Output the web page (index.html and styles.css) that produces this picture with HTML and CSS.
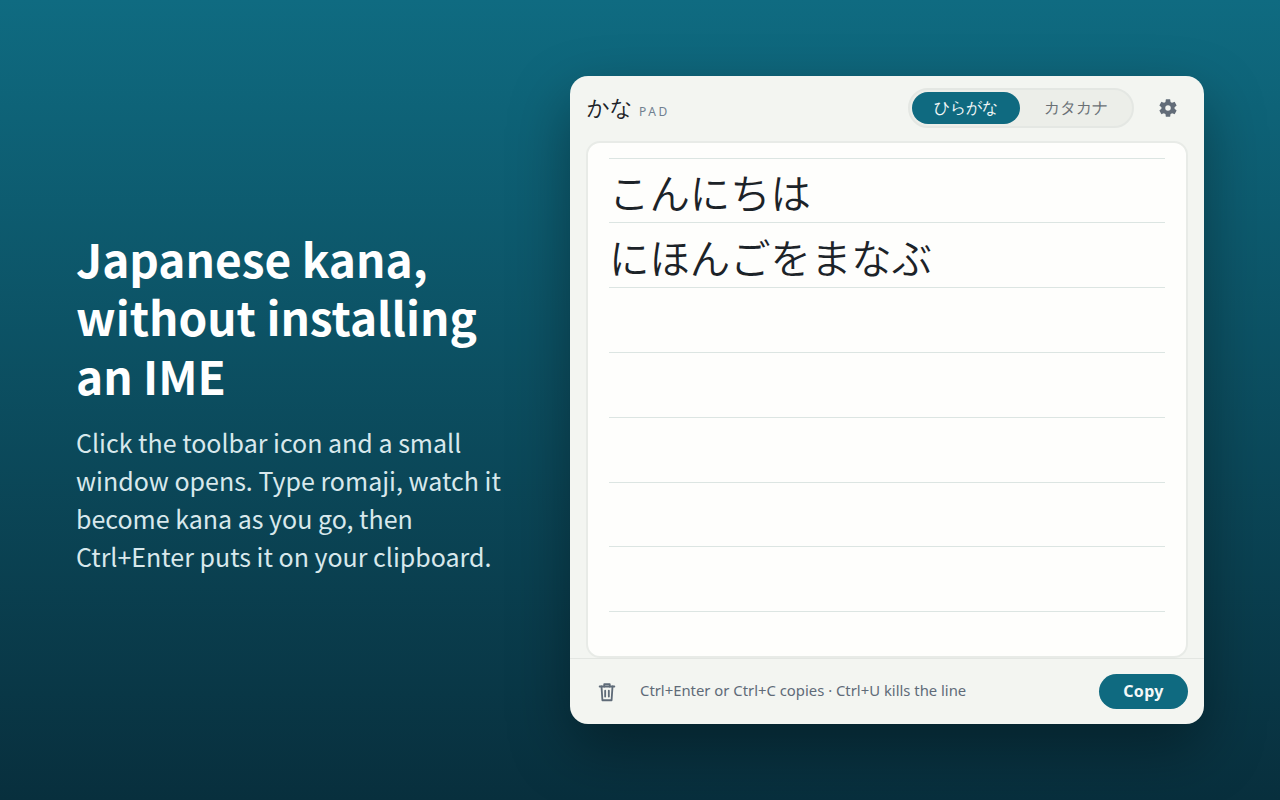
FILE: index.html
```html
<!DOCTYPE html>
<html lang="en">
<head>
<meta charset="utf-8">
<title>かな PAD</title>
<link rel="stylesheet" href="styles.css">
</head>
<body>
<main class="stage">
  <section class="pitch">
    <h1 class="headline">Japanese kana, without installing an IME</h1>
    <p class="lede">Click the toolbar icon and a small window opens. Type romaji, watch it become kana as you go, then Ctrl+Enter puts it on your clipboard.</p>
  </section>
  <section class="pad">
    <header class="pad-head">
      <div class="brand"><span class="brand-kana">かな</span><span class="brand-pad">PAD</span></div>
      <div class="tabs">
        <span class="tab tab-on">ひらがな</span>
        <span class="tab tab-off">カタカナ</span>
      </div>
      <svg class="gear" viewBox="0 0 24 24" width="22" height="22" aria-hidden="true"><path fill="currentColor" d="M19.14 12.94c.04-.3.06-.61.06-.94 0-.32-.02-.64-.07-.94l2.03-1.58a.49.49 0 0 0 .12-.61l-1.92-3.32a.49.49 0 0 0-.59-.22l-2.39.96c-.5-.38-1.03-.7-1.62-.94l-.36-2.54a.48.48 0 0 0-.48-.41h-3.84a.47.47 0 0 0-.47.41l-.36 2.54c-.59.24-1.13.57-1.62.94l-2.39-.96a.48.48 0 0 0-.59.22L2.74 8.87a.47.47 0 0 0 .12.61l2.03 1.58c-.05.3-.09.63-.09.94s.02.64.07.94l-2.03 1.58a.49.49 0 0 0-.12.61l1.92 3.32c.12.22.37.29.59.22l2.39-.96c.5.38 1.03.7 1.62.94l.36 2.54c.05.24.24.41.48.41h3.84c.24 0 .44-.17.47-.41l.36-2.54c.59-.24 1.13-.56 1.62-.94l2.39.96c.22.08.47 0 .59-.22l1.92-3.32a.47.47 0 0 0-.12-.61zM12 15A3 3 0 1 1 12 9a3 3 0 0 1 0 6z"/></svg>
    </header>
    <div class="paper">
      <div class="ruled">
        <div class="line">こんにちは</div>
        <div class="line">にほんごをまなぶ</div>
      </div>
    </div>
    <footer class="pad-foot">
      <svg class="trash" viewBox="0 0 24 24" width="22" height="22" aria-hidden="true"><g fill="none" stroke="currentColor" stroke-width="2" stroke-linecap="round" stroke-linejoin="round"><path d="M4 6h16"/><path d="M9 6V3.5h6V6"/><path d="M6 6l1 15h10l1-15"/><path d="M10 10.5v6.5"/><path d="M14 10.5v6.5"/></g></svg>
      <span class="hint">Ctrl+Enter or Ctrl+C copies · Ctrl+U kills the line</span>
      <span class="copy">Copy</span>
    </footer>
  </section>
</main>
</body>
</html>
```

FILE: styles.css
```css
* { box-sizing: border-box; }
html, body { margin: 0; height: 100%; }
body {
  font-family: "Noto Sans CJK JP", "Noto Sans", sans-serif;
  background: #0e6a80;
  overflow: hidden;
}
.stage {
  width: 1280px;
  height: 800px;
  display: flex;
  align-items: center;
  justify-content: space-between;
  padding: 0 76px 0 76px;
  background: linear-gradient(180deg, #0f6b81 0%, #082f3d 100%);
}
.pitch { width: 440px; flex: none; color: #fff; padding-top: 4px; }
.headline {
  margin: 0;
  font-size: 46px;
  line-height: 58.5px;
  font-weight: 700;
  color: #fff;
}
.lede {
  margin: 19px 0 0;
  font-size: 25px;
  line-height: 38px;
  color: #d8e8ec;
}
.pad {
  width: 634px;
  height: 648px;
  flex: none;
  display: flex;
  flex-direction: column;
  background: #f3f5f1;
  border-radius: 18px;
  box-shadow: 0 24px 60px rgba(0, 0, 0, .35);
}
.pad-head {
  height: 65px;
  flex: none;
  display: flex;
  align-items: center;
  padding: 0 25px 1px 17px;
}
.brand { display: flex; align-items: center; gap: 6px; flex: 1; }
.brand-kana { font-family: sans-serif; font-size: 22px; line-height: 1.4; color: #1c2328; }
.brand-pad {
  font-family: "Noto Sans", sans-serif;
  font-size: 12px;
  line-height: 1;
  margin-top: 8px;
  letter-spacing: 2.6px;
  color: #708090;
}
.tabs {
  display: flex;
  width: 226px;
  height: 40px;
  padding: 2px;
  border: 2px solid #e4e7e3;
  border-radius: 20px;
  background: #eceee9;
}
.tab {
  flex: 1;
  display: flex;
  align-items: center;
  justify-content: center;
  font-family: sans-serif;
  font-size: 16px;
  color: #6a7075;
  border-radius: 16px;
}
.tab-on { background: #0f6a80; color: #f3f7f7; }
.tab-off { padding-left: 3px; }
.gear { margin-left: 23px; color: #626c78; flex: none; }
.paper {
  flex: 1;
  margin: 0 16px;
  border: 2px solid #e8ebe7;
  border-radius: 14px;
  background: #fefefc;
  padding: 15px 21px 0;
  min-height: 0;
}
.ruled {
  height: 486px;
  background-image: repeating-linear-gradient(180deg, transparent .6px, transparent 64.4px, #dce5e2 64.4px, #dce5e2 65.4px);
}
.line {
  height: 64.8px;
  line-height: 68.4px;
  font-family: "Noto Sans CJK JP", sans-serif;
  font-weight: 350;
  font-size: 40.4px;
  color: #1c2328;
}
.pad-foot {
  height: 66px;
  flex: none;
  display: flex;
  align-items: center;
  padding: 0 16px 0 26px;
  border-top: 1px solid #e3e6e2;
}
.trash { color: #5f6b78; flex: none; }
.hint {
  font-family: "Noto Sans", sans-serif;
  font-size: 14.85px;
  color: #5f6b78;
  margin-left: 22px;
  padding-bottom: 4px;
  flex: 1;
}
.copy {
  font-family: "Noto Sans", sans-serif;
  font-size: 16px;
  font-weight: 700;
  letter-spacing: .3px;
  color: #f4f8f8;
  background: #0f6a80;
  width: 89px;
  height: 35px;
  padding-bottom: 2px;
  border-radius: 18px;
  display: flex;
  align-items: center;
  justify-content: center;
}
```
